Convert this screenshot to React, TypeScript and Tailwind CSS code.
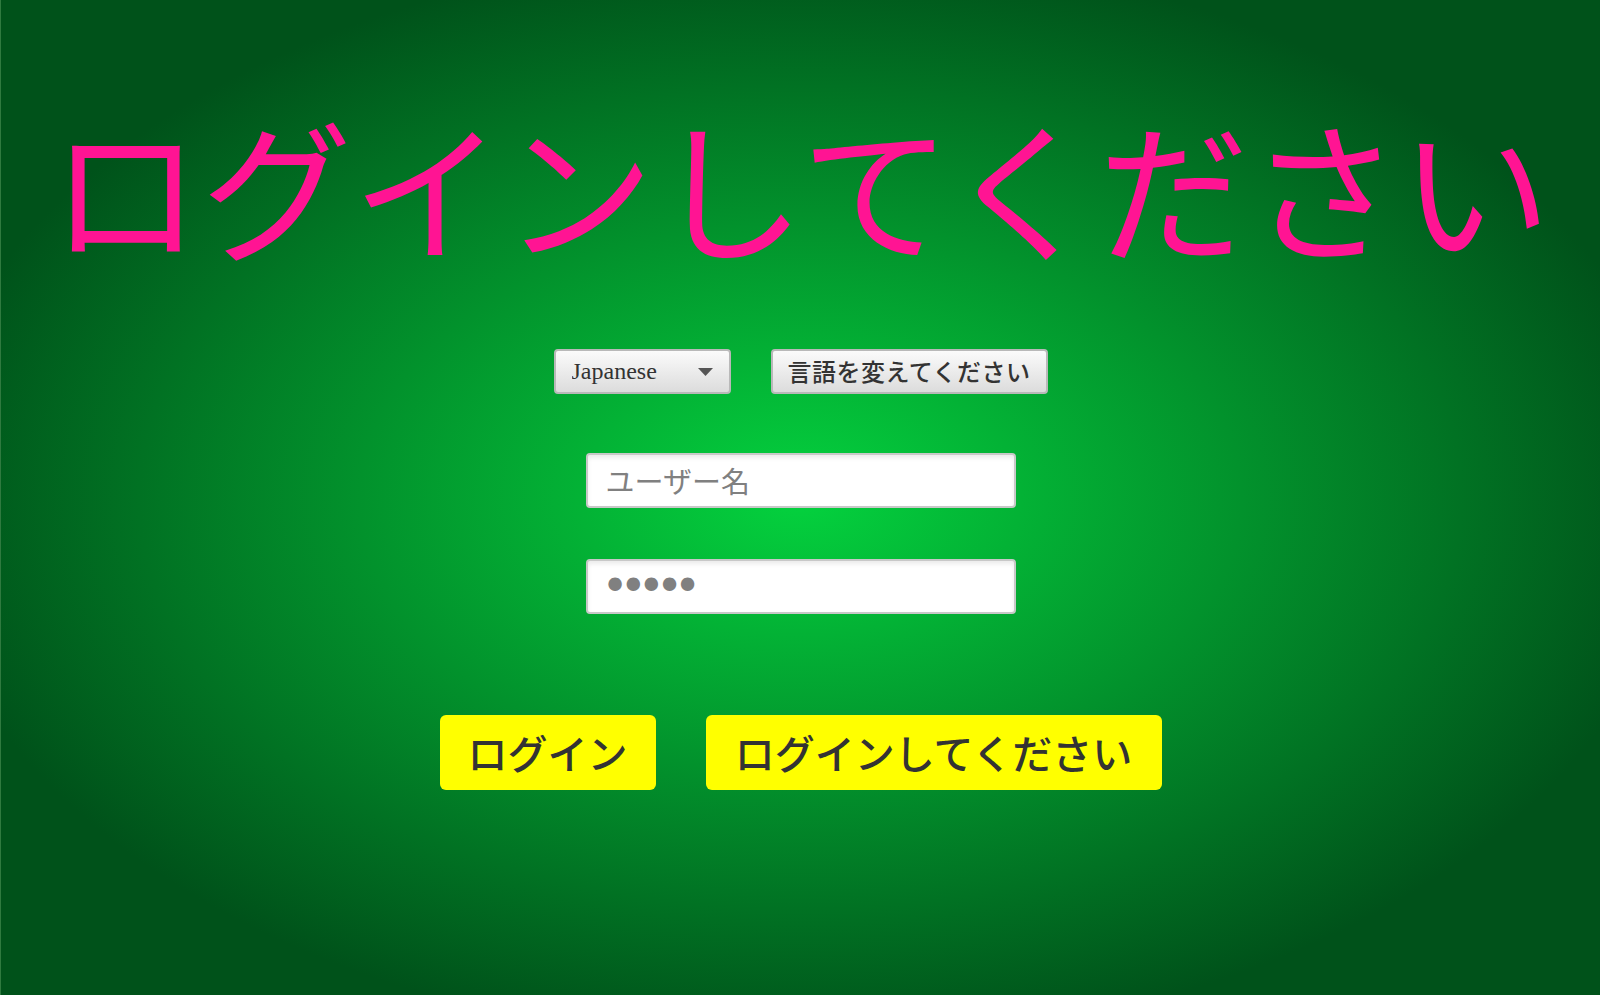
import { useState } from "react"

export default function App() {
    const [lang, setLang] = useState("ja")
    const [user, setUser] = useState("")
    const [pass, setPass] = useState("12345")

    const jp = "font-['Noto_Sans_CJK_JP','Noto_Sans',sans-serif]"

    return (
        <div
            className={`min-h-[995px] w-full border-l border-[#2f7a3f] bg-[radial-gradient(ellipse_at_center,#04d23e_0%,#00521a_78%)] ${jp}`}
        >
            <div className="flex flex-col items-center pt-[71px]">
                <h1 className="text-[151px] font-normal text-[#ff1493] whitespace-nowrap">
                    ログインしてください
                </h1>

                {/* Language */}
                <div className="mt-[51px] flex items-center gap-10">
                    <div className="relative">
                        <select
                            value={lang}
                            onChange={(e) => setLang(e.target.value)}
                            className="h-[45px] w-[177px] appearance-none rounded-[4px] border-2 border-[#b9b9b9] bg-[linear-gradient(#fbfbfb,#dcdcdc)] pl-4 pr-10 font-['Liberation_Serif',serif] text-[24px] text-[#333]"
                        >
                            <option value="ja">Japanese</option>
                            <option value="en">English</option>
                        </select>
                        <svg
                            className="pointer-events-none absolute right-[18px] top-[19px]"
                            width="15"
                            height="8"
                            viewBox="0 0 15 8"
                        >
                            <path d="M0 0 L15 0 L7.5 8 Z" fill="#555" />
                        </svg>
                    </div>
                    <button className="h-[45px] w-[277px] rounded-[4px] border-2 border-[#b9b9b9] bg-[linear-gradient(#fbfbfb,#dcdcdc)] text-[24px] font-medium tracking-[0.5px] text-[#333]">
                        言語を変えてください
                    </button>
                </div>

                {/* Credentials */}
                <input
                    type="text"
                    value={user}
                    onChange={(e) => setUser(e.target.value)}
                    placeholder="ユーザー名"
                    className="mt-[59px] h-[55px] w-[430px] rounded-[4px] border-2 border-[#c8c8c8] bg-white px-[18px] text-[29px] text-[#333] shadow-[inset_0_3px_4px_rgba(0,0,0,0.08)] placeholder:text-[#808080] outline-none"
                />
                <input
                    type="password"
                    value={pass}
                    onChange={(e) => setPass(e.target.value)}
                    className="mt-[51px] h-[55px] w-[430px] rounded-[4px] border-2 border-[#c8c8c8] bg-white pl-[14px] pr-[18px] font-['DejaVu_Sans',sans-serif] text-[46px] leading-none tracking-[-9px] text-[#808080] shadow-[inset_0_3px_4px_rgba(0,0,0,0.08)] outline-none"
                />

                {/* Actions */}
                <div className="mt-[101px] flex items-center gap-[50px]">
                    <button className="h-[75px] w-[216px] rounded-[6px] bg-[#ffff00] text-[40px] font-medium text-[#333]">
                        ログイン
                    </button>
                    <button className="h-[75px] w-[456px] rounded-[6px] bg-[#ffff00] text-[40px] font-medium text-[#333]">
                        ログインしてください
                    </button>
                </div>
            </div>
        </div>
    )
}
